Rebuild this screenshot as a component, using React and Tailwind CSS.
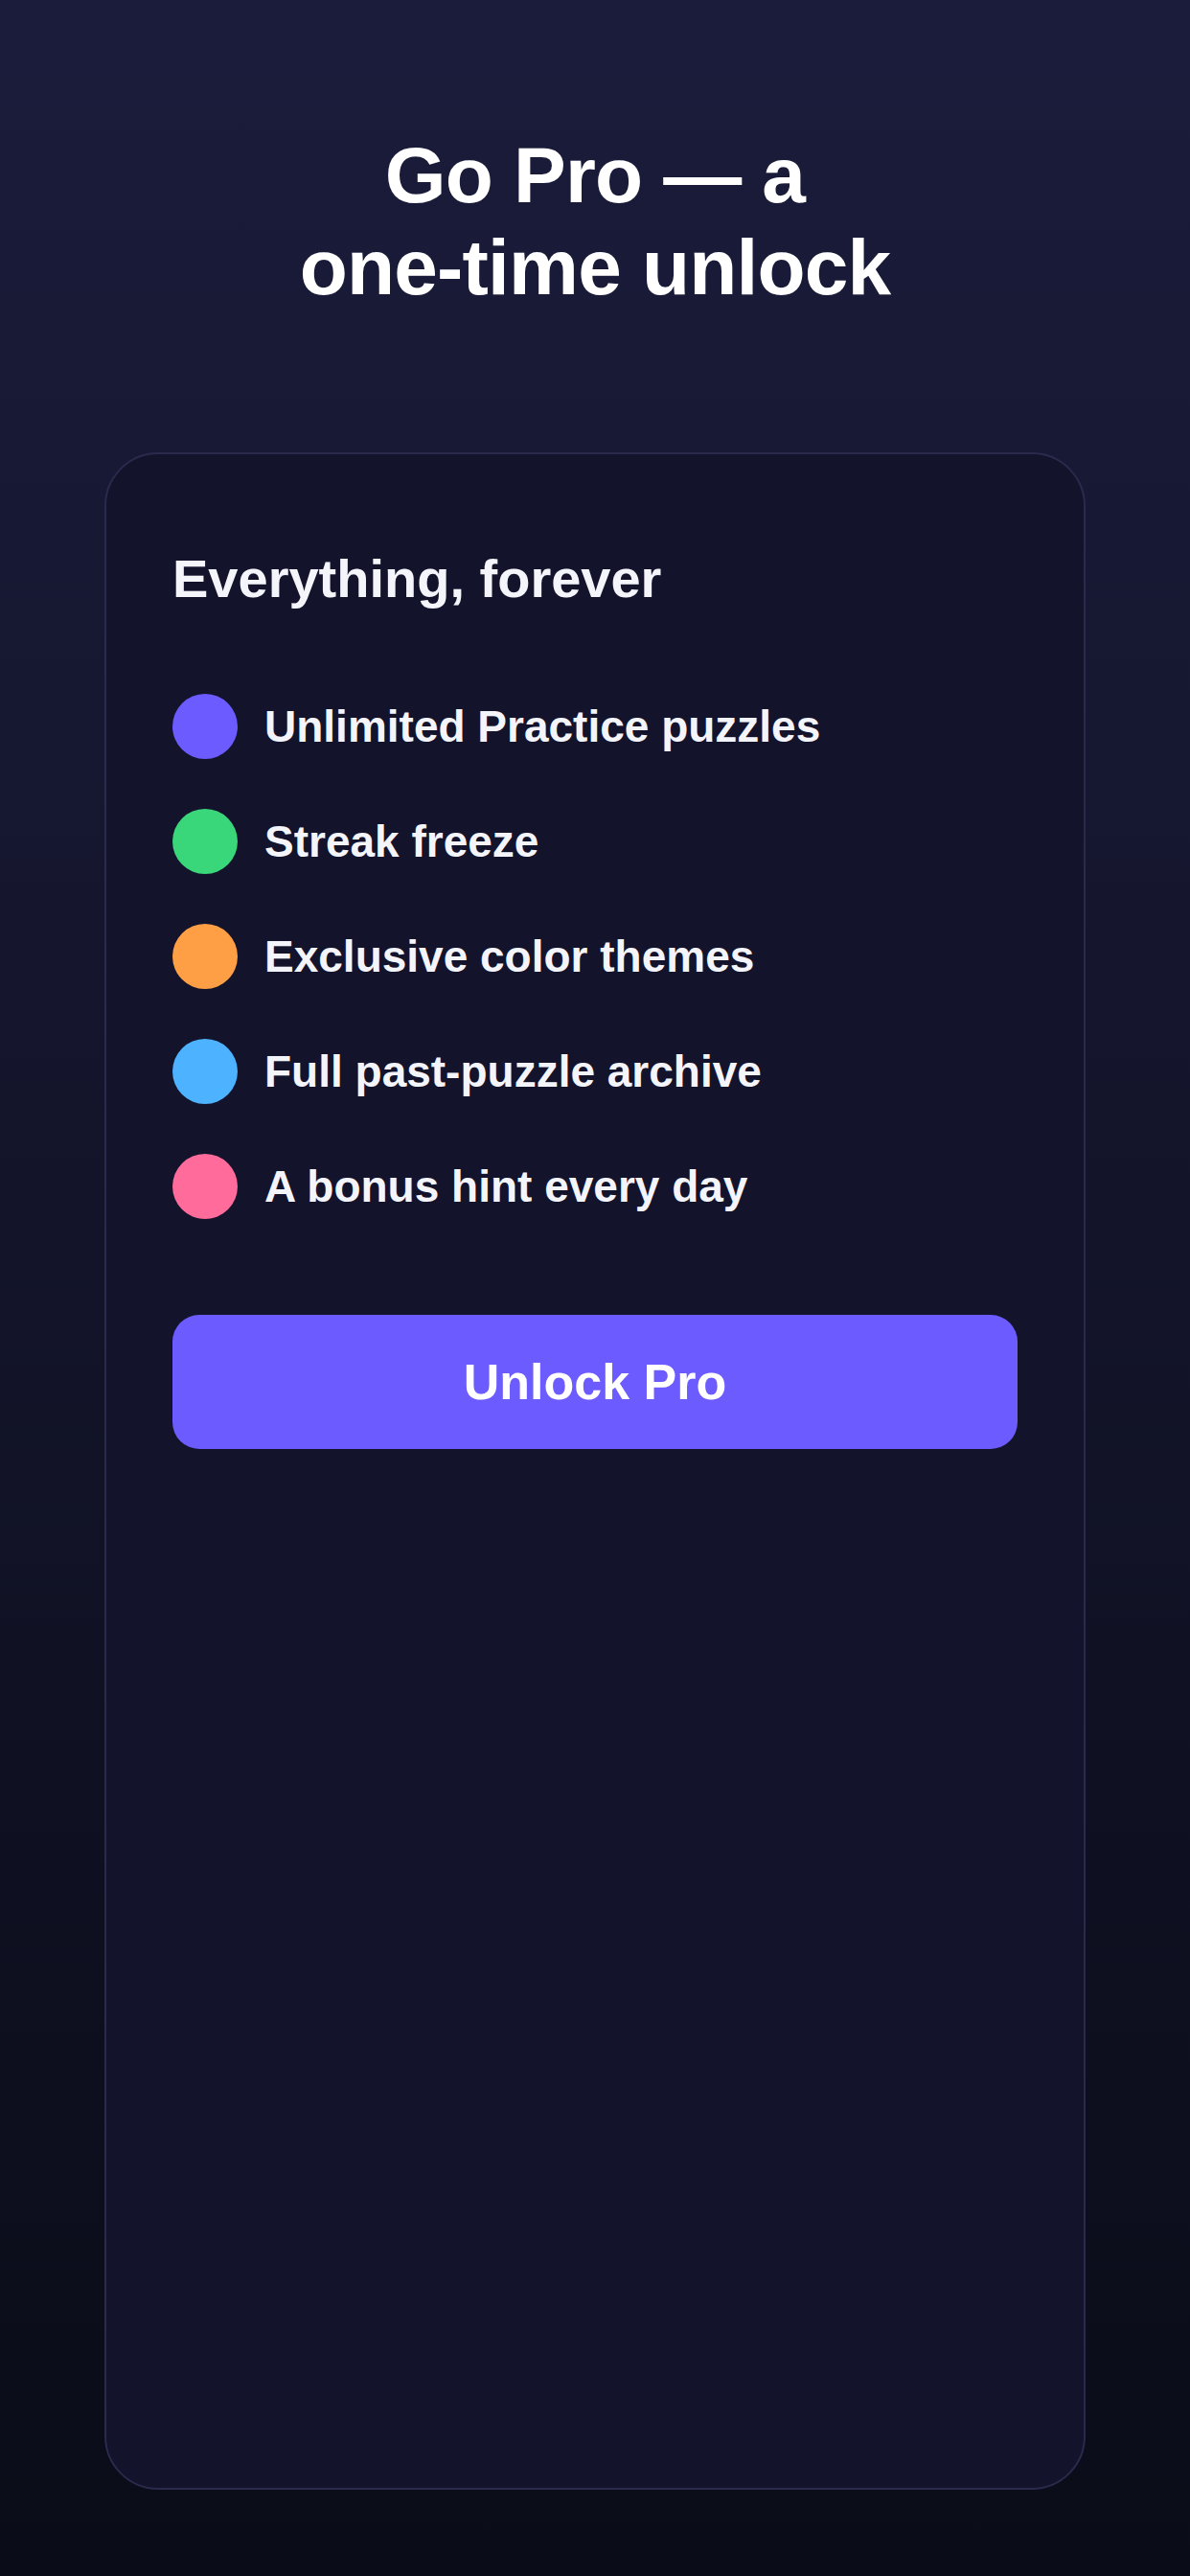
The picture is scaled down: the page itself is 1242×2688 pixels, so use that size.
import React from 'react';

const perks = [
  { label: 'Unlimited Practice puzzles', color: 'bg-[#6c5cff]' },
  { label: 'Streak freeze', color: 'bg-[#3ad67a]' },
  { label: 'Exclusive color themes', color: 'bg-[#ff9f45]' },
  { label: 'Full past-puzzle archive', color: 'bg-[#4db2ff]' },
  { label: 'A bonus hint every day', color: 'bg-[#ff6b9b]' }
];

const App = () => {
  return (
    <div
      className="min-h-screen w-full bg-gradient-to-b from-[#1b1c3b] to-[#0a0c18] flex flex-col items-center px-[109px] pt-[135px] pb-[90px]"
      style={{ fontFamily: '"Liberation Sans", Arial, sans-serif' }}
    >
      {/* 제목 */}
      <h1 className="text-center text-white font-bold text-[82px] leading-[96px] tracking-[-0.01em]">
        Go Pro — a
        <br />
        one-time unlock
      </h1>

      {/* 카드 */}
      <div className="mt-[145px] w-full h-[2126px] rounded-[56px] border-2 border-[#2b2a4c] bg-[#13132b] px-[69px] pt-[96px]">
        <h2 className="text-[#f4f4fb] font-bold text-[56px] leading-[68px]">
          Everything, forever
        </h2>

        <ul className="mt-[86px] flex flex-col gap-[52px]">
          {perks.map((perk) => (
            <li key={perk.label} className="flex items-center gap-[28px] h-[68px]">
              <span className={`w-[68px] h-[68px] rounded-full shrink-0 ${perk.color}`} />
              <span className="text-[#f4f4fb] font-bold text-[46px] leading-[68px]">
                {perk.label}
              </span>
            </li>
          ))}
        </ul>

        <button
          type="button"
          className="mt-[100px] w-full h-[140px] rounded-[28px] bg-[#6c5cff] text-white font-bold text-[52px] flex items-center justify-center"
        >
          Unlock Pro
        </button>
      </div>
    </div>
  );
};

export default App;
